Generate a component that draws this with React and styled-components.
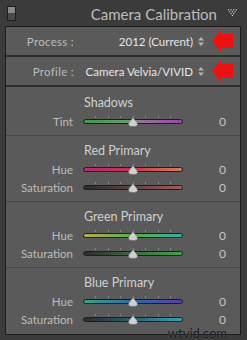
import React from "react"
import styled, { createGlobalStyle } from "styled-components"

const GlobalStyle = createGlobalStyle`
  html, body {
    margin: 0;
    padding: 0;
    background: #3b3b3b;
  }
  body {
    font-family: Lato, "Open Sans", "Liberation Sans", sans-serif;
  }
`

const sections = [
  {
    title: "Shadows",
    rows: [{ label: "Tint", track: "linear-gradient(90deg, #3f9a4c, #6c9a70 46%, #8f7a98 54%, #9c44ac)" }],
  },
  {
    title: "Red Primary",
    rows: [
      { label: "Hue", track: "linear-gradient(90deg, #b42a7a, #c8344e 50%, #d2805c)" },
      { label: "Saturation", track: "linear-gradient(90deg, #2c2c2c, #5e4444 50%, #a45a5a)" },
    ],
  },
  {
    title: "Green Primary",
    rows: [
      { label: "Hue", track: "linear-gradient(90deg, #b4b040, #56ae4c 50%, #2eb0a2)" },
      { label: "Saturation", track: "linear-gradient(90deg, #2c2c2c, #3c6a40 50%, #3aa64c)" },
    ],
  },
  {
    title: "Blue Primary",
    rows: [
      { label: "Hue", track: "linear-gradient(90deg, #2ea886, #2a6aa8 50%, #5a3ea6)" },
      { label: "Saturation", track: "linear-gradient(90deg, #2c2c2c, #2e6070 50%, #2ea4b4)" },
    ],
  },
]

const TICKS = [1, 2, 3, 4, 5, 6, 7]

const PanelIcon = () => (
  <svg width="9" height="15" viewBox="0 0 9 15">
    <rect x="0.5" y="0.5" width="8" height="14" fill="#4a4a4a" stroke="#1e1e1e" />
    <rect x="1" y="1" width="7" height="6" fill="#8a8a8a" />
  </svg>
)

const DotTriangle = () => {
  const dots = []
  for (let r = 0; r < 4; r++) {
    for (let c = r; c < 7 - r; c++) {
      if ((c + r) % 2 === 0) dots.push(<rect key={`${r}-${c}`} x={c * 1.2} y={r * 1.8} width="1" height="1" fill="#e8e8e8" />)
    }
  }
  return (
    <svg width="9" height="8" viewBox="0 0 8.4 7">
      {dots}
    </svg>
  )
}

const UpDown = () => (
  <svg width="6" height="9" viewBox="0 0 6 9">
    <path d="M3 0 L6 3.4 H0 Z" fill="#b4b4b4" />
    <path d="M3 9 L6 5.6 H0 Z" fill="#b4b4b4" />
  </svg>
)

const RedArrow = () => (
  <svg width="21" height="22" viewBox="0 0 21 22">
    <path d="M0 11 L9 0 V4 H21 V18 H9 V22 Z" fill="#ec1010" />
  </svg>
)

const Thumb = () => (
  <svg width="10" height="10" viewBox="0 0 10 10">
    <path d="M5 0.5 C6 2.5 9.5 5 9.5 7.2 C9.5 8.8 8 9.5 5 9.5 C2 9.5 0.5 8.8 0.5 7.2 C0.5 5 4 2.5 5 0.5 Z" fill="#d0d0d0" stroke="#6a6a6a" strokeWidth="0.6" />
  </svg>
)

const Slider = ({ track }) => (
  <SliderBox>
    <Ticks>
      {TICKS.map(t => (
        <Tick key={t} />
      ))}
    </Ticks>
    <Track style={{ backgroundImage: track }} />
    <ThumbHolder>
      <Thumb />
    </ThumbHolder>
  </SliderBox>
)

const App = () => (
  <>
    <GlobalStyle />
    <Page>
      <Header>
        <PanelIcon />
        <HeaderTitle>Camera Calibration</HeaderTitle>
        <DotTriangle />
      </Header>
      <Panel>
        <SelectRow>
          <SelectLabel>Process :</SelectLabel>
          <SelectValue>2012 (Current)</SelectValue>
          <UpDown />
          <ArrowSlot>
            <RedArrow />
          </ArrowSlot>
        </SelectRow>
        <SelectRow>
          <SelectLabel>Profile :</SelectLabel>
          <SelectValue>Camera Velvia/VIVID</SelectValue>
          <UpDown />
          <ArrowSlot>
            <RedArrow />
          </ArrowSlot>
        </SelectRow>
        {sections.map((s, i) => (
          <Section key={s.title} first={i === 0}>
            <SectionTitle>{s.title}</SectionTitle>
            {s.rows.map(r => (
              <SliderRow key={r.label}>
                <RowLabel>{r.label}</RowLabel>
                <Slider track={r.track} />
                <RowValue>0</RowValue>
              </SliderRow>
            ))}
          </Section>
        ))}
        <Watermark>wtvid.com</Watermark>
      </Panel>
    </Page>
  </>
)

export default App

const Page = styled.div`
  width: 247px;
  height: 340px;
  background: #3b3b3b;
  overflow: hidden;
`

const Header = styled.div`
  height: 26px;
  display: flex;
  align-items: center;
  padding: 0 10px 0 7px;
  box-sizing: border-box;
`

const HeaderTitle = styled.div`
  flex: 1;
  text-align: right;
  margin-right: 11px;
  font-size: 15px;
  color: #bdbdbd;
  margin-top: 1px;
`

const Panel = styled.div`
  position: relative;
  margin: 0 6px 0 5px;
  border: 1px solid #1c1c1c;
  background: #5a5a5a;
  height: 309px;
  box-sizing: border-box;
`

const SelectRow = styled.div`
  height: 28px;
  display: flex;
  align-items: center;
  padding-right: 7px;
  border-bottom: 2px solid #2c2c2c;
`

const SelectLabel = styled.div`
  width: 68px;
  flex: none;
  text-align: right;
  font-size: 11.5px;
  color: #bcbcbc;
  letter-spacing: 0.3px;
`

const SelectValue = styled.div`
  flex: 1;
  min-width: 0;
  margin-right: 5px;
  text-align: right;
  font-size: 11.5px;
  color: #e6e6e6;
  white-space: nowrap;
`

const ArrowSlot = styled.div`
  margin-left: 8px;
  line-height: 0;
`

const Section = styled.div`
  border-top: ${p => (p.first ? "none" : "1px solid #474747")};
  padding: ${p => (p.first ? "7px" : "6px")} 0 5px;
`

const SectionTitle = styled.div`
  height: 18px;
  line-height: 18px;
  padding-left: 78px;
  font-size: 12.5px;
  color: #d0d0d0;
`

const SliderRow = styled.div`
  height: 18px;
  display: grid;
  grid-template-columns: 67px 100px 1fr;
  column-gap: 10px;
  align-items: center;
  padding-right: 14px;
`

const RowLabel = styled.div`
  text-align: right;
  font-size: 11.5px;
  color: #bcbcbc;
`

const RowValue = styled.div`
  text-align: right;
  font-size: 12px;
  color: #c8c8c8;
`

const SliderBox = styled.div`
  position: relative;
  height: 18px;
  display: flex;
  flex-direction: column;
  justify-content: center;
`

const Ticks = styled.div`
  display: flex;
  justify-content: space-between;
  padding: 0 12px;
  height: 2px;
  margin-bottom: 1px;
`

const Tick = styled.div`
  width: 1px;
  height: 2px;
  background: #8a8a8a;
`

const Track = styled.div`
  height: 3px;
  border: 1px solid #1e1e1e;
  border-radius: 3px;
  margin-bottom: 2px;
`

const ThumbHolder = styled.div`
  position: absolute;
  left: 45px;
  top: 5px;
  line-height: 0;
`

const Watermark = styled.div`
  position: absolute;
  right: 13px;
  bottom: -7px;
  font-size: 13px;
  color: #151515;
  text-shadow: 0 0 1px #777;
`
